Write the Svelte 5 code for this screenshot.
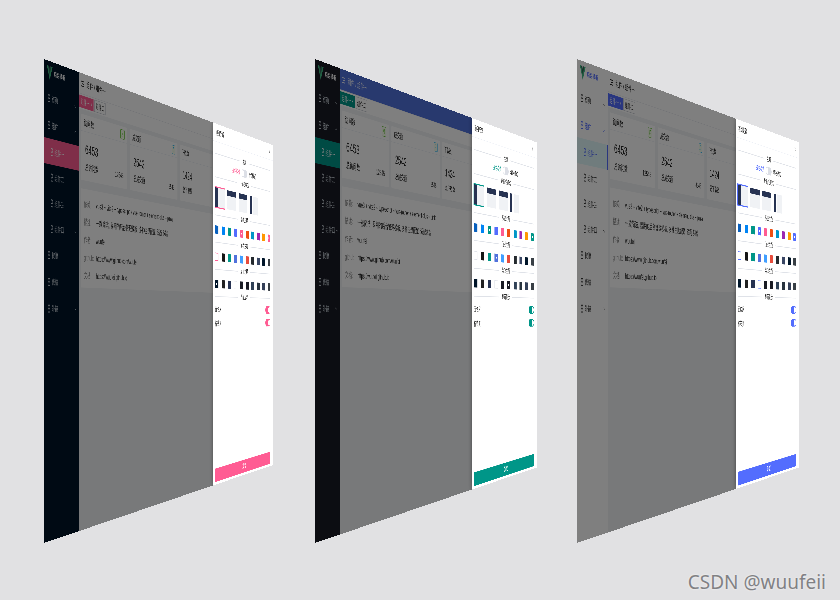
<script lang="ts">
  type Theme = {
    id: string;
    primary: string;
    width: number;
    sidebar: number;
    drawer: number;
    menuBg: string;
    menuText: string;
    headerBg: string;
    headerText: string;
    light?: boolean;
    headerPick: number;
    menuPick: number;
  };

  const themes: Theme[] = [
    { id: 'pink', primary: '#ff5c93', width: 1440, sidebar: 154, drawer: 504, menuBg: '#001529', menuText: '#c4ccd4', headerBg: '#ffffff', headerText: '#222222', headerPick: 0, menuPick: 0 },
    { id: 'green', primary: '#009688', width: 1372, sidebar: 108, drawer: 524, menuBg: '#191b24', menuText: '#c4ccd4', headerBg: '#5172dc', headerText: '#e4e9f8', headerPick: 3, menuPick: 5 },
    { id: 'blue', primary: '#536dfe', width: 1372, sidebar: 135, drawer: 512, menuBg: '#ffffff', menuText: '#333333', headerBg: '#ffffff', headerText: '#222222', light: true, headerPick: 0, menuPick: 3 },
  ];

  const menu = [
    { label: '首页', group: true },
    { label: '组件', group: true, open: true },
    { label: '组件一', sub: true, active: true },
    { label: '组件二', sub: true },
    { label: '组件三', sub: true },
    { label: '组件四', sub: true, group: true },
    { label: '权限' },
    { label: '表格' },
    { label: '外链', group: true },
  ];

  const cards = [
    { title: '访问数', tag: '月', color: '#67c23a', value: '6453', label: '总访问数', total: '12545' },
    { title: '成交额', tag: '月', color: '#2db7f5', value: '2542', label: '总成交额', total: '8545' },
    { title: '下载数', tag: '周', color: '#ff9800', value: '1424', label: '总下载数', total: '7654' },
  ];

  const details = [
    ['依赖', 'vue3 + vite2 + typescript + vue-router + element-plus + pinia'],
    ['描述', '一款简洁, 易用的后台管理模板, 多种主题配置, 适配多端'],
    ['作者', 'wuufei'],
    ['github', 'https://www.github.com/wuufei'],
    ['文档', 'https://wuufei.github.io'],
  ];

  const accents = ['#0960bd', '#0084f4', '#009688', '#536dfe', '#ff5c93', '#ee4f12', '#0096c7', '#9c27b0', '#ff9800'];
  const headers = ['#ffffff', '#151515', '#009688', '#5172dc', '#409eff', '#e74c3c', '#24292e', '#394664', '#001529', '#383f45'];
  const menus = ['#001529', '#212121', '#273352', '#ffffff', '#191b24', '#191a23', '#304156', '#28333e', '#344058', '#383f45'];

  function sections(t: Theme) {
    return [
      { name: '系统主题', colors: [...accents, t.primary], picked: [accents.indexOf(t.primary), 9] },
      { name: '顶栏主题', colors: headers, picked: [t.headerPick] },
      { name: '菜单主题', colors: menus, picked: [t.menuPick] },
    ];
  }
</script>

<main class="stage">
  {#each themes as t (t.id)}
    <div class="slot" class:wide={t.width > 1400}>
      <section
        class="screen"
        class:light={t.light}
        style="--primary: {t.primary}; --screen-w: {t.width}px; --sidebar-w: {t.sidebar}px; --drawer-w: {t.drawer}px; --menu-bg: {t.menuBg}; --menu-text: {t.menuText}; --header-bg: {t.headerBg}; --header-text: {t.headerText};"
      >
        <aside class="sidebar">
          <div class="logo">
            <svg width="24" height="30" viewBox="0 0 24 30">
              <path d="M0 1h7l5 14 5-14h7L12 29z" fill="#41b883" />
              <path d="M5 1h5l2 6 2-6h5l-7 17z" fill="#34695a" />
            </svg>
            <strong>后台模板</strong>
          </div>
          <nav>
            {#each menu as item}
              <a href="#{t.id}" class:sub={item.sub} class:active={item.active} class:open={item.open}>
                <svg class="glyph" width="14" height="18" viewBox="0 0 14 18" fill="none" stroke="currentColor" stroke-width="2">
                  <circle cx="7" cy="6" r="4" />
                  <path d="M7 10v7M4 16h6" />
                </svg>
                <span>{item.label}</span>
                {#if item.group}
                  <svg class="chevron" width="10" height="8" viewBox="0 0 10 8" fill="none" stroke="currentColor">
                    <path d={item.open ? 'M1 6l4-4 4 4' : 'M1 2l4 4 4-4'} />
                  </svg>
                {/if}
              </a>
            {/each}
          </nav>
        </aside>

        <div class="main">
          <header class="topbar">
            <svg width="16" height="14" viewBox="0 0 16 14" fill="none" stroke="currentColor" stroke-width="2">
              <path d="M0 2h16M6 7h10M0 12h16" />
            </svg>
            <span>组件 / 组件一</span>
          </header>
          <div class="tabs">
            <button class="tab current">组件一 ×</button>
            <button class="tab">组件二</button>
          </div>
          <div class="content">
            <div class="cards">
              {#each cards as card}
                <article class="card">
                  <div class="card-head">
                    <span>{card.title}</span>
                    <span class="tag" style="color: {card.color}">{card.tag}</span>
                  </div>
                  <div class="value">{card.value}</div>
                  <div class="card-foot">
                    <span>{card.label}</span>
                    <span>{card.total}</span>
                  </div>
                </article>
              {/each}
            </div>
            <dl class="details">
              {#each details as [term, text]}
                <div>
                  <dt>{term}:</dt>
                  <dd>{text}</dd>
                </div>
              {/each}
            </dl>
          </div>
        </div>

        <div class="mask"></div>

        <aside class="drawer">
          <div class="drawer-head">
            <span>项目配置</span>
            <button class="close" aria-label="关闭">×</button>
          </div>
          <div class="drawer-body">
            <h3 class="divider">主题</h3>
            <label class="mode">
              <span class="on">亮色模式</span>
              <input type="checkbox" class="switch" />
              <span>暗色模式</span>
            </label>

            <h3 class="divider">导航栏模式</h3>
            <div class="layouts">
              <button class="thumb side picked" aria-label="左侧菜单"></button>
              <button class="thumb top" aria-label="顶部菜单"></button>
              <button class="thumb top" aria-label="混合菜单"></button>
              <button class="thumb split" aria-label="分栏菜单"></button>
            </div>

            {#each sections(t) as section}
              <h3 class="divider">{section.name}</h3>
              <div class="swatches">
                {#each section.colors as color, i}
                  <button
                    class="swatch"
                    class:picked={section.picked.includes(i)}
                    class:pale={color === '#ffffff'}
                    style="background: {color}"
                    aria-label={color}
                  ></button>
                {/each}
              </div>
            {/each}

            <h3 class="divider">界面显示</h3>
            <div class="options">
              <label>面包屑 <input type="checkbox" class="switch" checked /></label>
              <label>标签页 <input type="checkbox" class="switch" checked /></label>
            </div>
            <button class="submit">重置</button>
          </div>
        </aside>
      </section>
    </div>
  {/each}

  <p class="credit">CSDN @wuufeii</p>
</main>

<style>
  :global(body) {
    margin: 0;
    background: #e1e1e3;
  }

  .stage {
    position: relative;
    box-sizing: border-box;
    display: flex;
    justify-content: space-evenly;
    align-items: center;
    min-height: 100vh;
    padding: 2px 0 0 2px;
    overflow: hidden;
    font-family: "Liberation Sans", "Noto Sans CJK SC", sans-serif;
    font-size: 16px;
    line-height: 20px;
    color: #222;
  }

  .stage * {
    box-sizing: border-box;
  }

  /* Each screen is laid out flat, then turned away on its left edge */
  .slot {
    flex: none;
    width: 221px;
    height: 484px;
    perspective: 1286px;
    perspective-origin: 114px 254px;
  }

  .slot.wide {
    width: 229px;
  }

  .screen {
    position: relative;
    display: flex;
    width: var(--screen-w);
    height: 968px;
    overflow: hidden;
    background: #f0f2f5;
    transform-origin: 0 0;
    transform: scale3d(0.5, 0.5, 0.5) rotateY(66.4deg);
  }

  button {
    border: 0;
    padding: 0;
    font: inherit;
    cursor: pointer;
  }

  .sidebar {
    flex: none;
    width: var(--sidebar-w);
    background: var(--menu-bg);
    color: var(--menu-text);
  }

  .logo {
    display: flex;
    align-items: center;
    gap: 6px;
    height: 48px;
    padding-left: 12px;
    overflow: hidden;
    white-space: nowrap;
    color: #fff;
  }

  .logo svg {
    flex: none;
  }

  .logo strong {
    font-size: 12px;
  }

  .light .logo {
    color: var(--primary);
  }

  nav a {
    display: flex;
    align-items: center;
    gap: 4px;
    height: 54px;
    padding: 0 12px 0 14px;
    color: inherit;
    font-size: 14px;
    text-decoration: none;
    white-space: nowrap;
  }

  nav a.sub {
    height: 52px;
    padding-left: 26px;
  }

  nav a.active {
    background: var(--primary);
    color: #fff;
  }

  .glyph {
    flex: none;
  }

  .chevron {
    flex: none;
    margin-left: auto;
  }

  .light nav a.open {
    color: var(--primary);
  }

  .light nav a.active {
    background: #e0f8fb;
    color: var(--primary);
    border-right: 4px solid var(--primary);
  }

  .main {
    flex: 1;
    min-width: 0;
  }

  .topbar {
    display: flex;
    align-items: center;
    gap: 10px;
    height: 44px;
    padding-left: 8px;
    background: var(--header-bg);
    color: var(--header-text);
    border-bottom: 1px solid #e4e7ed;
  }

  .tabs {
    display: flex;
    align-items: center;
    gap: 4px;
    height: 32px;
    background: #fff;
  }

  .tab {
    height: 26px;
    padding: 0 6px;
    border: 1px solid #c0c4cc;
    background: #fff;
    color: #333;
    font-size: 14px;
  }

  .tab.current {
    border-color: var(--primary);
    background: var(--primary);
    color: #fff;
  }

  .content {
    padding: 10px 8px;
  }

  .cards {
    display: grid;
    grid-template-columns: 23fr 28fr 72fr;
    gap: 14px;
  }

  .card {
    height: 140px;
    background: #fff;
    border-radius: 3px;
    overflow: hidden;
  }

  .card-head,
  .card-foot {
    display: flex;
    justify-content: space-between;
    align-items: center;
    padding: 0 14px;
  }

  .card-head {
    height: 36px;
    border-bottom: 1px solid #ebeef5;
  }

  .tag {
    padding: 0 4px;
    border: 1px solid currentColor;
    border-radius: 2px;
    background: #f6ffed;
    font-size: 12px;
  }

  .value {
    padding: 22px 20px 12px;
    font-size: 28px;
    line-height: 32px;
  }

  .card-foot {
    padding: 0 20px;
  }

  .details {
    height: 210px;
    margin: 18px 0 0;
    padding: 14px;
    background: #fff;
    border-radius: 3px;
  }

  .details div {
    display: flex;
    align-items: center;
    gap: 8px;
    height: 38px;
    white-space: nowrap;
  }

  .details dt {
    min-width: 50px;
    color: #888;
  }

  .details dd {
    margin: 0;
  }

  .mask {
    position: absolute;
    inset: 0;
    background: rgba(0, 0, 0, 0.5);
  }

  .drawer {
    position: absolute;
    top: 0;
    right: 0;
    bottom: 0;
    display: flex;
    flex-direction: column;
    width: var(--drawer-w);
    background: #fff;
    box-shadow: 0 0 24px rgba(0, 0, 0, 0.4);
  }

  .drawer-head {
    display: flex;
    justify-content: space-between;
    align-items: center;
    height: 48px;
    padding: 0 30px 0 20px;
    border-bottom: 1px solid #ebeef5;
  }

  .close {
    background: none;
    color: #555;
    font-size: 20px;
  }

  .drawer-body {
    flex: 1;
    display: flex;
    flex-direction: column;
    padding: 22px 26px 7px 16px;
  }

  .divider {
    display: flex;
    align-items: center;
    gap: 20px;
    margin: 0;
    font-size: 16px;
    font-weight: 400;
    line-height: 20px;
  }

  .divider::before,
  .divider::after {
    content: "";
    flex: 1;
    height: 2px;
    background: #dfe2e8;
  }

  .mode {
    display: flex;
    justify-content: center;
    align-items: center;
    gap: 12px;
    height: 43px;
  }

  .mode .on {
    color: var(--primary);
  }

  .switch {
    appearance: none;
    display: flex;
    width: 46px;
    height: 22px;
    margin: 0;
    padding: 2px;
    border-radius: 11px;
    background: #dcdfe6;
  }

  .switch::before {
    content: "";
    width: 18px;
    height: 18px;
    border-radius: 50%;
    background: #fff;
  }

  .switch:checked {
    justify-content: flex-end;
    background: var(--primary);
  }

  .layouts {
    display: flex;
    align-items: center;
    gap: 20px;
    height: 82px;
    padding-top: 6px;
  }

  .thumb {
    width: 72px;
    height: 52px;
    background: #f0f2f5;
  }

  .thumb.side {
    background: linear-gradient(90deg, #273352 34%, #f0f2f5 34%);
  }

  .thumb.top {
    background: linear-gradient(#273352 28%, #f0f2f5 28%);
  }

  .thumb.split {
    background: linear-gradient(90deg, #273352 24%, #fff 24%, #fff 40%, #f0f2f5 40%);
  }

  .thumb.picked {
    outline: 3px solid var(--primary);
  }

  .swatches {
    display: flex;
    justify-content: space-between;
    align-items: center;
    height: 53px;
    padding-top: 4px;
  }

  .swatch {
    display: grid;
    place-items: center;
    width: 25px;
    height: 22px;
  }

  .swatch.pale {
    border: 1px solid #dcdfe6;
  }

  .swatch.picked::after {
    content: "";
    width: 8px;
    height: 5px;
    background: #fff;
  }

  .swatch.pale.picked {
    border: 2px solid var(--primary);
  }

  .options {
    padding-top: 6px;
  }

  .options label {
    display: flex;
    justify-content: space-between;
    align-items: center;
    height: 38px;
  }

  .submit {
    height: 36px;
    margin-top: auto;
    background: var(--primary);
    color: #fff;
  }

  .credit {
    position: absolute;
    right: 14px;
    bottom: 6px;
    margin: 0;
    font-family: "Noto Sans", sans-serif;
    font-size: 19px;
    line-height: 24px;
    color: #808083;
    text-shadow: 0 0 2px #fff;
  }
</style>
